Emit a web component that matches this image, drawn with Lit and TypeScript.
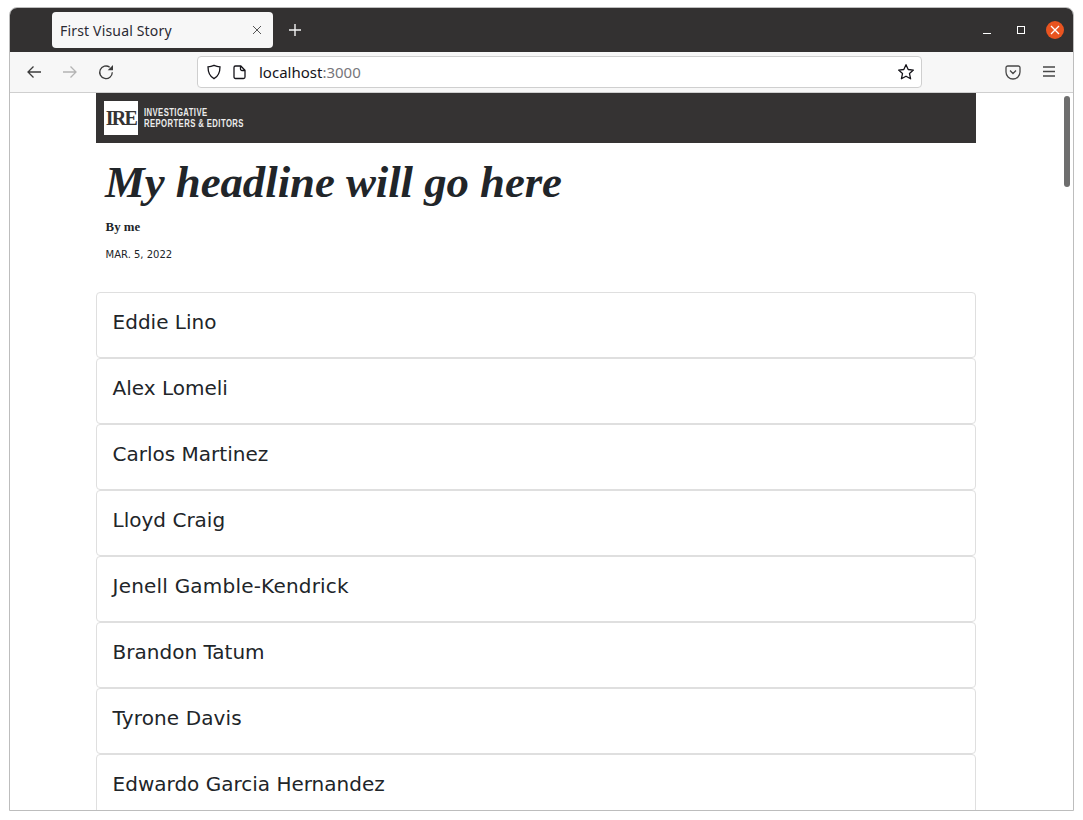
import { LitElement, html, css, svg } from "lit";
import { customElement } from "lit/decorators.js";

/* Tracking per name makes up for the hinted glyph advances of the reference. */
const NAMES: { name: string; track: number }[] = [
  { name: "Eddie Lino", track: 0 },
  { name: "Alex Lomeli", track: 0 },
  { name: "Carlos Martinez", track: 0 },
  { name: "Lloyd Craig", track: 0 },
  { name: "Jenell Gamble-Kendrick", track: 0.2 },
  { name: "Brandon Tatum", track: 0 },
  { name: "Tyrone Davis", track: 0.12 },
  { name: "Edwardo Garcia Hernandez", track: 0 },
];

const ic = (w: number, h: number, body: unknown, cls = "") =>
  html`<svg class=${cls} width=${w} height=${h} viewBox="0 0 ${w} ${h}" fill="none" stroke="currentColor" stroke-width="1.3">${body}</svg>`;

@customElement("app-root")
export class AppRoot extends LitElement {
  static styles = css`
    :host { display: block; height: 820px; background: #fff; overflow: hidden; }
    .window {
      margin: 7px 9px 0 9px; height: 804px; box-sizing: border-box;
      border: 1px solid #bdbdbd; border-top-left-radius: 8px; border-top-right-radius: 8px;
      display: flex; flex-direction: column; overflow: hidden; position: relative; background: #fff;
    }
    .titlebar { height: 44px; background: #333131; display: flex; align-items: center; flex: none; box-sizing: border-box; }
    .tab {
      margin-left: 42px; width: 221px; height: 36px; background: #f7f7f7; border-radius: 4px;
      display: flex; align-items: center; box-sizing: border-box; padding: 2px 11px 0 8px;
      font: 14px "Noto Sans", "Open Sans", sans-serif; letter-spacing: 0.17px; color: #2b2a33; margin-top: -1px;
    }
    .tab-title { flex: 1; }
    .tab-x { color: #555; display: flex; margin-top: -2px; }
    .plus { margin-left: 16px; color: #f4f4f4; display: flex; }
    .wctl { margin-left: auto; display: flex; align-items: center; color: #fff; padding-right: 9px; }
    .min { margin-right: 26px; margin-top: 2px; display: flex; }
    .max { margin-right: 21px; display: flex; }
    .close { width: 18px; height: 18px; border-radius: 50%; background: #e95420; display: flex; align-items: center; justify-content: center; }
    .toolbar {
      height: 40px; flex: none; background: #f7f7f7; border-bottom: 1px solid #cfcfcf;
      display: flex; align-items: center; position: relative; color: #3c3c3c; box-sizing: content-box;
    }
    .nav { display: flex; margin-left: 16px; gap: 20px; align-items: center; width: 171px; flex: none; }
    .nav svg { display: block; }
    .dim { color: #b4b4b4; display: flex; }
    .url {
      width: 725px; height: 32px; box-sizing: border-box; background: #fff; border: 1px solid #cfcfcf;
      border-radius: 4px; display: flex; align-items: center; padding: 0 6px 0 8px; flex: none;
      font: 15px "Noto Sans", "Open Sans", sans-serif; color: #15141a;
    }
    .shield { margin-right: 11px; }
    .page-ic { margin-right: 12px; }
    .host-port { color: #77767b; }
    .addr { flex: 1; }
    .tools { display: flex; align-items: center; gap: 20px; margin-left: 83px; color: #484848; }
    .viewport { flex: 1; overflow: hidden; position: relative; background: #fff; }
    .scrollbar { position: absolute; right: 3px; top: 3px; width: 6px; height: 91px; border-radius: 3px; background: #6e6e6e; }
    .page { width: 880px; margin-left: 86px; }
    .brand { height: 50px; background: #353333; display: flex; align-items: center; padding-left: 8px; box-sizing: border-box; }
    .logo {
      width: 34px; height: 34px; background: #fff; color: #353333; display: flex; align-items: center; justify-content: center;
      font: 700 20px "Liberation Serif", serif; letter-spacing: -1.7px; flex: none;
    }
    .brand-text {
      margin-left: 6px; color: #ececec; font: 700 11px/11px "Liberation Sans", sans-serif;
      letter-spacing: 0.6px; text-transform: uppercase; white-space: nowrap;
      transform: scaleX(0.7); transform-origin: left center;
    }
    .head { padding: 0 9.6px; height: 149px; box-sizing: border-box; }
    h1 {
      margin: 0 0 0 -0.6px; padding-top: 13px; font: italic 700 44.8px/52px "Liberation Serif", serif; color: #212529;
      letter-spacing: -0.04px;
    }
    .by { font: 700 12.8px/14px "Liberation Serif", serif; color: #212529; margin-top: 12px; }
    .date { font: 10px/12px "DejaVu Sans", sans-serif; color: #212529; margin-top: 15px; }
    .item {
      height: 66px; box-sizing: border-box; border: 1px solid #dfdfdf; border-radius: 4px; padding: 14px 15.6px;
      font: 20px/30px "DejaVu Sans", sans-serif; color: #212529;
    }
  `;

  render() {
    return html`
      <div class="window">
        <div class="titlebar">
          <div class="tab">
            <span class="tab-title">First Visual Story</span>
            <span class="tab-x">${ic(10, 10, svg`<path d="M1 1l8 8M9 1l-8 8" stroke-width="1"/>`)}</span>
          </div>
          <span class="plus">${ic(12, 12, svg`<path d="M6 0v12M0 6h12" stroke-width="1.4"/>`)}</span>
          <div class="wctl">
            <span class="min">${ic(8, 8, svg`<path d="M0 6.5h8" stroke-width="1"/>`)}</span>
            <span class="max">${ic(8, 8, svg`<rect x=".5" y=".5" width="7" height="7" stroke-width="1"/>`)}</span>
            <span class="close">${ic(10, 10, svg`<path d="M1 1l8 8M9 1l-8 8" stroke-width="1.3"/>`)}</span>
          </div>
        </div>
        <div class="toolbar">
          <div class="nav">
            ${ic(16, 16, svg`<path d="M15 8H2M7.500 2.500L2 8l5.500 5.500"/>`)}
            <span class="dim">${ic(16, 16, svg`<path d="M1 8h13M8.500 2.500L14 8l-5.500 5.500"/>`)}</span>
            ${ic(16, 16, svg`<path d="M14.300 8.300a6.300 6.300 0 1 1-2.600-5.100"/><path d="M15 1v5.300H9.700z" fill="currentColor" stroke="none"/>`)}
          </div>
          <div class="url">
            ${ic(16, 16, svg`<path d="M8 1.300c2 .9 4 1.400 6 1.500 0 5-1.600 9.600-6 11.900C3.600 12.400 2 7.800 2 2.800c2-.1 4-.6 6-1.500z"/>`, "shield")}
            ${ic(14, 16, svg`<path d="M2.500 2h5.300L12 6.200v6.800a1.500 1.500 0 0 1-1.500 1.500h-8A1.500 1.500 0 0 1 1 13V3.500A1.500 1.500 0 0 1 2.500 2zM7.500 2v3a1.500 1.500 0 0 0 1.500 1.500h3"/>`, "page-ic")}
            <span class="addr">localhost<span class="host-port">:3000</span></span>
            ${ic(18, 18, svg`<path d="M9 1.700l2.200 4.800 5.200.6-3.900 3.500 1.100 5.200L9 13.200l-4.600 2.600 1.100-5.200L1.600 7.100l5.200-.6z" stroke-linejoin="round"/>`)}
          </div>
          <div class="tools">
            ${ic(16, 16, svg`<path d="M2.800 2h10.400A1.800 1.800 0 0 1 15 3.800V8A7 7 0 0 1 1 8V3.800A1.800 1.800 0 0 1 2.800 2zM5 6.500L8 9.500l3-3"/>`)}
            ${ic(16, 16, svg`<path d="M2 3h12M2 7.500h12M2 12h12"/>`)}
          </div>
        </div>
        <div class="viewport">
          <div class="scrollbar"></div>
          <div class="page">
            <div class="brand">
              <div class="logo">IRE</div>
              <div class="brand-text">Investigative<br />Reporters &amp; Editors</div>
            </div>
            <div class="head">
              <h1>My headline will go here</h1>
              <div class="by">By me</div>
              <div class="date">MAR. 5, 2022</div>
            </div>
            ${NAMES.map(
              (n) => html`<div class="item" style="letter-spacing:${n.track}px">${n.name}</div>`
            )}
          </div>
        </div>
      </div>
    `;
  }
}
